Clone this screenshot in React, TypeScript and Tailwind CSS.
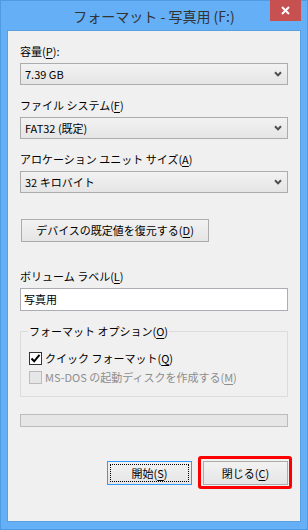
import React from "react";

const Mn = ({ c }: { c: string }) => (
  <span className="underline underline-offset-[2px] decoration-[1px]">{c}</span>
);

const Chevron = () => (
  <svg width="8" height="6" viewBox="0 0 8 6">
    <path d="M1 1.2 L4 4.4 L7 1.2" fill="none" stroke="#4d4d4d" strokeWidth="2" />
  </svg>
);

const Select = ({ value }: { value: string }) => (
  <div className="mt-[4px] h-[22px] border border-[#acacac] bg-linear-to-b from-[#f2f2f2] to-[#e5e5e5] flex items-center justify-between pl-[4px] pr-[5px]">
    <span>{value}</span>
    <Chevron />
  </div>
);

const Checkbox = ({ checked, disabled }: { checked?: boolean; disabled?: boolean }) => (
  <div
    className={
      disabled
        ? "w-[13px] h-[13px] border border-[#bcbcbc] bg-[#e6e6e6]"
        : "w-[13px] h-[13px] border border-[#333333] bg-white flex items-center justify-center"
    }
  >
    {checked && (
      <svg width="11" height="11" viewBox="0 0 11 11">
        <path d="M1.5 5.5 L4.2 8.3 L9.5 1.8" fill="none" stroke="#000" strokeWidth="2" />
      </svg>
    )}
  </div>
);

export default function App() {
  return (
    <div className="w-[308px] h-[530px] bg-[#64aff5] border border-[#4f9be2] flex flex-col font-['Noto_Sans_CJK_JP',sans-serif] text-[11px] text-black">
      {/* Title bar */}
      <div className="relative h-[29px] flex items-center justify-center">
        <span className="text-[14px] text-[#333333] leading-none mt-[1px]">
          フォーマット - 写真用 (F:)
        </span>
        <div className="absolute top-[-1px] right-[6px] w-[31px] h-[21px] bg-[#c75050] flex items-center justify-center">
          <svg width="9" height="9" viewBox="0 0 9 9">
            <path d="M1 1 L8 8 M8 1 L1 8" stroke="#fff" strokeWidth="2" />
          </svg>
        </div>
      </div>

      {/* Client area */}
      <div className="mx-[6px] h-[492px] bg-[#f0f0f0] border border-[#5b9edd] pt-[12px] pl-[12px] pr-[12px] flex flex-col">
        <div className="h-[16px] leading-[16px]">
          容量(<Mn c="P" />):
        </div>
        <Select value="7.39 GB" />

        <div className="mt-[12px] h-[16px] leading-[16px]">
          ファイル システム(<Mn c="F" />)
        </div>
        <Select value="FAT32 (既定)" />

        <div className="mt-[12px] h-[16px] leading-[16px]">
          アロケーション ユニット サイズ(<Mn c="A" />)
        </div>
        <Select value="32 キロバイト" />

        <div className="mt-[26px] ml-[1px] w-[188px] h-[23px] border border-[#acacac] bg-linear-to-b from-[#f2f2f2] to-[#e5e5e5] flex items-center justify-center">
          <span>
            デバイスの既定値を復元する(<Mn c="D" />)
          </span>
        </div>

        <div className="mt-[26px] h-[16px] leading-[16px]">
          ボリューム ラベル(<Mn c="L" />)
        </div>
        <div className="mt-[4px] h-[23px] border border-[#abadb3] bg-white flex items-center pl-[3px]">
          写真用
        </div>

        <fieldset className="mt-[12px] border border-[#dcdcdc] pb-[11px]">
          <legend className="ml-[7px] px-[1px] h-[16px] leading-[16px]">
            フォーマット オプション(<Mn c="O" />)
          </legend>
          <div className="mt-[12px] h-[15px] flex items-center pl-[8px] gap-[3px]">
            <Checkbox checked />
            <span>
              クイック フォーマット(<Mn c="Q" />)
            </span>
          </div>
          <div className="mt-[4px] h-[15px] flex items-center pl-[8px] gap-[3px] text-[#8d8d8d]">
            <Checkbox disabled />
            <span>
              MS-DOS の起動ディスクを作成する(<Mn c="M" />)
            </span>
          </div>
        </fieldset>

        <div className="mt-[17px] h-[13px] border border-[#bcbcbc] bg-[#e6e6e6]" />

        <div className="mt-[34px] flex justify-end gap-[11px]">
          <div className="w-[85px] h-[24px] border border-[#3399ff] bg-linear-to-b from-[#f2f2f2] to-[#e5e5e5] p-[2px]">
            <div className="h-full border border-dotted border-black flex items-center justify-center">
              <span>
                開始(<Mn c="S" />)
              </span>
            </div>
          </div>
          <div className="relative w-[85px] h-[24px] border border-[#acacac] bg-linear-to-b from-[#f2f2f2] to-[#e5e5e5] flex items-center justify-center">
            <span>
              閉じる(<Mn c="C" />)
            </span>
            <div className="absolute -top-[6px] -bottom-[5px] -left-[6px] -right-[5px] border-[3px] border-[#ff0000] rounded-[3px]" />
          </div>
        </div>
      </div>
    </div>
  );
}
